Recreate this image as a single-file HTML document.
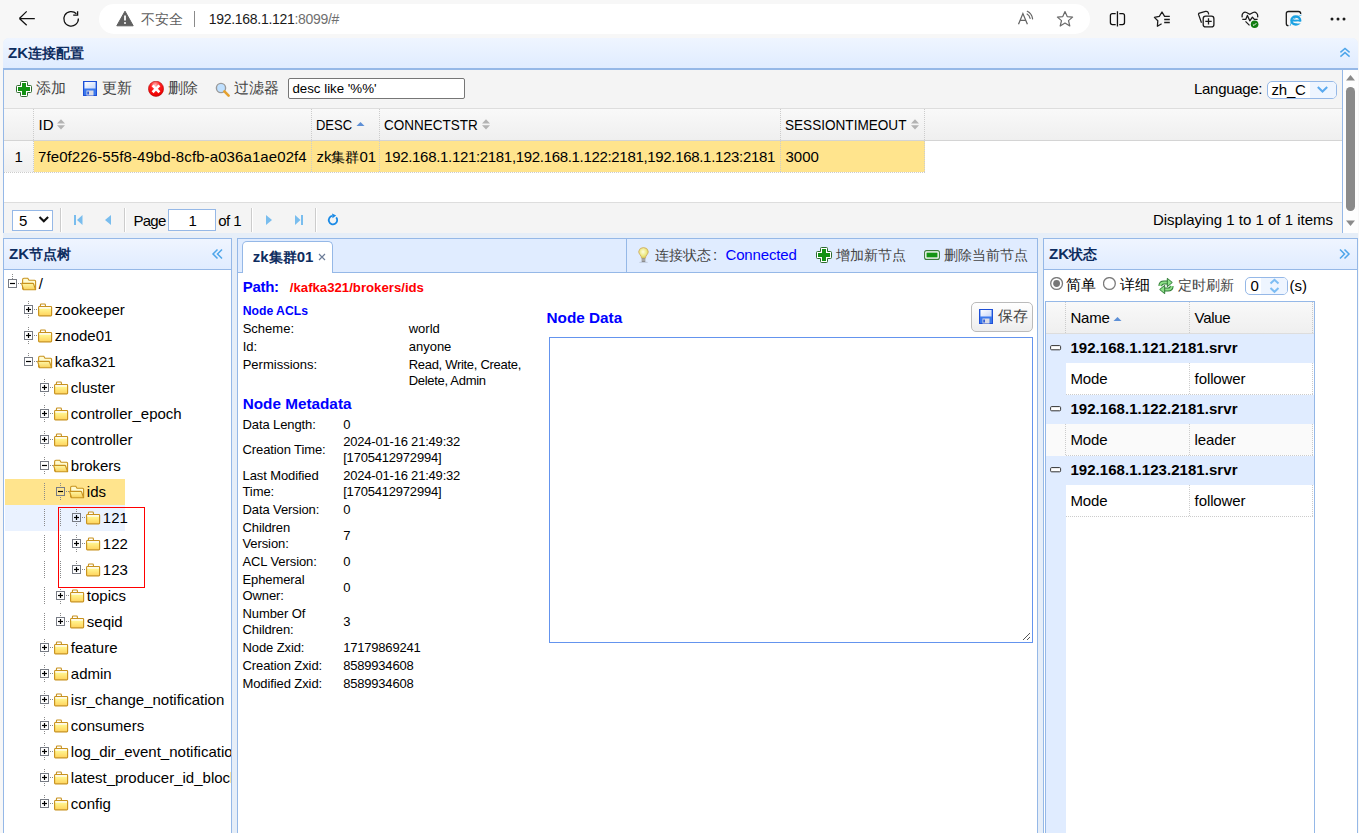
<!DOCTYPE html>
<html><head><meta charset="utf-8"><style>
html,body{margin:0;padding:0;width:1359px;height:833px;overflow:hidden;background:#f7f7f7}
body{position:relative;font-family:"Liberation Sans",sans-serif;color:#000}
.r{position:absolute;display:block}
.t{position:absolute;white-space:nowrap}
</style></head><body>
<div class="r" style="left:0px;top:0px;width:1359px;height:833px;background:#f7f7f7"></div>
<svg class="r" style="left:18px;top:10px;" width="18" height="18" viewBox="0 0 18 18"><path d="M1.4 8.5H16.8M1.4 8.5L8.7 1.4M1.4 8.5L8.7 15.3" fill="none" stroke="#111" stroke-width="1.25"/></svg>
<svg class="r" style="left:61px;top:10px;" width="20" height="19" viewBox="0 0 20 19"><path d="M17.4 8.6A7.3 7.3 0 1 1 15.4 3.8" fill="none" stroke="#111" stroke-width="1.25"/><path d="M16.6 1.2V5.1H12.2" fill="none" stroke="#111" stroke-width="1.3"/></svg>
<div class="r" style="left:99px;top:4px;width:991px;height:30px;background:#fff;border-radius:15px"></div>
<svg class="r" style="left:116px;top:10px;" width="18" height="17" viewBox="0 0 18 17"><path d="M9 1.2L17.2 15.8H0.8Z" fill="#5f5f5f" stroke="#5f5f5f" stroke-width="1" stroke-linejoin="round"/><path d="M9 5.6V10.6" stroke="#fff" stroke-width="1.8"/><circle cx="9" cy="13" r="1" fill="#fff"/></svg>
<div class="t" style="left:140.5px;top:10.15px;font-size:14px;line-height:18px;color:#5f5f5f">不安全</div>
<div class="r" style="left:194px;top:11px;width:1px;height:16px;background:#8a8a8a"></div>
<div class="t" style="left:208.8px;top:10.45px;font-size:14px;line-height:18px;color:#1a1a1a;letter-spacing:-0.3px">192.168.1.121<span style="color:#6f6f6f">:8099/#</span></div>
<svg class="r" style="left:1016px;top:10px;" width="19" height="17" viewBox="0 0 19 17"><path d="M2.5 14.3L6.9 3.6L11.4 14.3M4.4 10.4H9.6" fill="none" stroke="#646464" stroke-width="1.25"/><path d="M11.1 4.1Q13.5 5.5 14.1 8.4M11.3 1.3Q15.8 3.5 16.6 8.8" fill="none" stroke="#646464" stroke-width="1.2" stroke-linecap="round"/></svg>
<svg class="r" style="left:1056px;top:10px;" width="18" height="18" viewBox="0 0 18 18"><path d="M9 1.5L11.2 6.6L16.6 7.1L12.5 10.6L13.8 16L9 13.1L4.2 16L5.5 10.6L1.4 7.1L6.8 6.6Z" fill="none" stroke="#6a6a6a" stroke-width="1.2" stroke-linejoin="round"/></svg>
<svg class="r" style="left:1109px;top:10px;" width="17" height="18" viewBox="0 0 17 18"><path d="M6.7 3.6H3.4Q1.4 3.6 1.4 5.6V12.6Q1.4 14.6 3.4 14.6H6.7M10.3 3.6H13.5Q15.5 3.6 15.5 5.6V12.6Q15.5 14.6 13.5 14.6H10.3M8.45 1.3V16.6" fill="none" stroke="#111" stroke-width="1.3"/></svg>
<svg class="r" style="left:1153px;top:10px;" width="19" height="18" viewBox="0 0 19 18"><path d="M8.6 13.8L4.4 16.2L4.8 10.8L1.4 7.4L6.3 6.4L9 2L11.6 6.4H16.8" fill="none" stroke="#1b1b1b" stroke-width="1.3" stroke-linejoin="round"/><path d="M11.2 9.5H16.8M11.2 12.5H16.8" stroke="#1b1b1b" stroke-width="1.3"/></svg>
<svg class="r" style="left:1197px;top:10px;" width="19" height="19" viewBox="0 0 19 19"><path d="M4.5 12.7L1.6 4.6Q1.2 3.5 2.4 3.1L8.5 1.4Q10.8 0.9 11.5 3.2L11.6 4.5" fill="none" stroke="#1b1b1b" stroke-width="1.25"/><rect x="6.2" y="6.2" width="10.7" height="10.7" rx="2.5" fill="#f7f7f7" stroke="#1b1b1b" stroke-width="1.3"/><path d="M11.5 8.2V14.6M8.3 11.4H14.7" stroke="#1b1b1b" stroke-width="1.3"/></svg>
<svg class="r" style="left:1241px;top:10px;" width="19" height="19" viewBox="0 0 19 19"><path d="M1.3 7.4C0.3 3.5 3 1.5 5.5 2.5L8.8 4.3L12.1 2.5C14.6 1.5 17.3 3.5 16.6 7.4" fill="none" stroke="#1b1b1b" stroke-width="1.3"/><path d="M1.3 9.4H4.7L6.4 5.4L8.8 10.8L11.4 7.2L13.4 9.4H16.6" fill="none" stroke="#1b1b1b" stroke-width="1.3" stroke-linejoin="round"/><path d="M4.5 11.4L8.5 15.4" stroke="#1b1b1b" stroke-width="1.3"/><circle cx="13.6" cy="14.3" r="3.8" fill="#107c10"/><path d="M11.9 14.5L13 15.5L15.3 13.2" fill="none" stroke="#fff" stroke-width="1"/></svg>
<svg class="r" style="left:1284px;top:9px;" width="20" height="20" viewBox="0 0 20 20"><path d="M4.5 16.7Q2.3 16.7 2.3 14.5V4.5Q2.3 2.5 4.5 2.5H14.5Q16.7 2.5 16.7 4.7V5" fill="none" stroke="#1b1b1b" stroke-width="1.3"/><ellipse cx="11.8" cy="11.5" rx="4.4" ry="4" fill="none" stroke="#1ba1e2" stroke-width="2.4"/><path d="M7.8 11.6H16.4" stroke="#1ba1e2" stroke-width="1.9"/><rect x="12.6" y="12.7" width="5" height="1.8" fill="#f7f7f7"/><path d="M6 17Q7.5 9 17.5 6" fill="none" stroke="#1ba1e2" stroke-width="1" opacity="0.7"/></svg>
<svg class="r" style="left:1330px;top:16px;" width="16" height="6" viewBox="0 0 16 6"><circle cx="2" cy="3" r="1.5" fill="#1b1b1b"/><circle cx="8" cy="3" r="1.5" fill="#1b1b1b"/><circle cx="14" cy="3" r="1.5" fill="#1b1b1b"/></svg>
<div class="r" style="left:3px;top:38px;width:1355px;height:795px;background:#E6EEF8;border-radius:6px 6px 0 0"></div>
<div class="r" style="left:3px;top:38px;width:1355px;height:32px;background:linear-gradient(#EFF5FF,#E0ECFF);border-radius:6px 6px 0 0;border-bottom:2px solid #95B8E7;box-sizing:border-box"></div>
<div class="t" style="left:8px;top:43.10px;font-size:15px;line-height:19px;color:#0E2D5F;font-weight:700">ZK<span style="font-size:14px">连接配置</span></div>
<svg class="r" style="left:1338px;top:46px;" width="14" height="13" viewBox="0 0 14 13"><path d="M2.4 6.4L7 2.4L11.6 6.4M2.4 10.6L7 6.6L11.6 10.6" fill="none" stroke="#4fa6ea" stroke-width="1.5"/></svg>
<div class="r" style="left:3px;top:70px;width:1340px;height:163px;background:#fff;border-left:1px solid #95B8E7;border-right:1px solid #95B8E7;box-sizing:border-box"></div>
<div class="r" style="left:1343px;top:70px;width:15px;height:163px;background:#fdfdfd"></div>
<svg class="r" style="left:1345px;top:74px;" width="11" height="7" viewBox="0 0 11 7"><path d="M1 6.5L5.5 1L10 6.5Z" fill="#8a8a8a"/></svg>
<div class="r" style="left:1346px;top:87px;width:9px;height:124px;background:#8a8a8a;border-radius:4.5px"></div>
<svg class="r" style="left:1345px;top:220px;" width="11" height="7" viewBox="0 0 11 7"><path d="M1 0.5L5.5 6L10 0.5Z" fill="#8a8a8a"/></svg>
<div class="r" style="left:4px;top:70px;width:1338px;height:39px;background:#F4F4F4;border-bottom:1px solid #ddd;box-sizing:border-box"></div>
<svg class="r" style="left:16px;top:81px;" width="16" height="16" viewBox="0 0 16 16"><path d="M5.5 0.5H10.5Q11.5 0.5 11.5 1.5V4.5H14.5Q15.5 4.5 15.5 5.5V10.5Q15.5 11.5 14.5 11.5H11.5V14.5Q11.5 15.5 10.5 15.5H5.5Q4.5 15.5 4.5 14.5V11.5H1.5Q0.5 11.5 0.5 10.5V5.5Q0.5 4.5 1.5 4.5H4.5V1.5Q4.5 0.5 5.5 0.5Z" fill="#fff" stroke="#2e6b2e" stroke-width="1"/><path d="M6 2H10V6H14V10H10V14H6V10H2V6H6Z" fill="#119111"/></svg>
<div class="t" style="left:36px;top:78.30px;font-size:15px;line-height:19px;color:#444">添加</div>
<svg class="r" style="left:83px;top:81px;" width="14" height="15" viewBox="0 0 14 15"><defs><linearGradient id="svl" x1="0" y1="0" x2="1" y2="1"><stop offset="0" stop-color="#ffffff"/><stop offset="1" stop-color="#c6d6fa"/></linearGradient></defs><rect x="0.5" y="0.5" width="13" height="14" fill="#3b78ec" stroke="#1e4fd6"/><rect x="1.5" y="1" width="11" height="6.5" fill="url(#svl)"/><rect x="3.5" y="9.5" width="7" height="5" fill="#dcdce4"/><rect x="4.3" y="10.5" width="1.6" height="3" fill="#1e4fd6"/></svg>
<div class="t" style="left:102px;top:78.30px;font-size:15px;line-height:19px;color:#444">更新</div>
<svg class="r" style="left:148px;top:81px;" width="16" height="16" viewBox="0 0 16 16"><defs><radialGradient id="rg1" cx="0.45" cy="0.25" r="0.85"><stop offset="0" stop-color="#ffc0c0"/><stop offset="0.35" stop-color="#f22"/><stop offset="0.8" stop-color="#e00"/><stop offset="1" stop-color="#a30000"/></radialGradient></defs><circle cx="8" cy="7.8" r="7.6" fill="url(#rg1)" stroke="#b01010" stroke-width="0.6"/><path d="M4.6 4.4L11.4 11.2M11.4 4.4L4.6 11.2" stroke="#fff" stroke-width="2.7"/></svg>
<div class="t" style="left:167.5px;top:78.30px;font-size:15px;line-height:19px;color:#444">删除</div>
<svg class="r" style="left:214.5px;top:81.5px;" width="15" height="15" viewBox="0 0 15 15"><circle cx="6" cy="6" r="4.6" fill="#bfe0ff" stroke="#9a9a9a" stroke-width="1.4"/><path d="M9.4 9.4L13.6 13.6" stroke="#e5a12f" stroke-width="2.6" stroke-linecap="round"/></svg>
<div class="t" style="left:233.5px;top:78.30px;font-size:15px;line-height:19px;color:#444">过滤器</div>
<div class="r" style="left:288px;top:78px;width:177px;height:21px;background:#fff;border:1px solid #767676;border-radius:2px;box-sizing:border-box"></div>
<div class="t" style="left:292.4px;top:79.79px;font-size:13.3px;line-height:17px">desc like '%%'</div>
<div class="t" style="left:1194px;top:79.30px;font-size:15px;line-height:19px;letter-spacing:-0.3px">Language:</div>
<div class="r" style="left:1267px;top:81px;width:70px;height:18px;background:#fff;border:1px solid #95B8E7;border-radius:5px;box-sizing:border-box;overflow:hidden"></div>
<div class="r" style="left:1310px;top:82px;width:26px;height:16px;background:#eef5ff;border-radius:0 4px 4px 0"></div>
<div class="t" style="left:1271.5px;top:80.30px;font-size:15px;line-height:19px;letter-spacing:-0.2px">zh_C</div>
<svg class="r" style="left:1316px;top:85px;" width="13" height="9" viewBox="0 0 13 9"><path d="M1.8 2L6.5 6.5L11.2 2" fill="none" stroke="#5aaaf0" stroke-width="2"/></svg>
<div class="r" style="left:4px;top:109px;width:1338px;height:32px;background:linear-gradient(#F9F9F9,#EFEFEF);border-bottom:1px solid #d4d4d4;box-sizing:border-box"></div>
<div class="r" style="left:33px;top:109px;width:1px;height:31px;background:repeating-linear-gradient(#ccc 0 1px,transparent 1px 2px)"></div>
<div class="r" style="left:311px;top:109px;width:1px;height:31px;background:repeating-linear-gradient(#ccc 0 1px,transparent 1px 2px)"></div>
<div class="r" style="left:379px;top:109px;width:1px;height:31px;background:repeating-linear-gradient(#ccc 0 1px,transparent 1px 2px)"></div>
<div class="r" style="left:780px;top:109px;width:1px;height:31px;background:repeating-linear-gradient(#ccc 0 1px,transparent 1px 2px)"></div>
<div class="r" style="left:924px;top:109px;width:1px;height:31px;background:repeating-linear-gradient(#ccc 0 1px,transparent 1px 2px)"></div>
<div class="t" style="left:38.5px;top:115.30px;font-size:15px;line-height:19px">ID</div>
<svg class="r" style="left:57px;top:119px;" width="8" height="11" viewBox="0 0 8 11"><path d="M0 4.5L4 0.2L8 4.5Z M0 6.2L4 10.5L8 6.2Z" fill="#b3b3b3"/></svg>
<div class="t" style="left:316.4px;top:115.30px;font-size:15px;line-height:19px;transform:scaleX(0.865);transform-origin:0 0">DESC</div>
<svg class="r" style="left:355.5px;top:121px;" width="9" height="6" viewBox="0 0 9 6"><path d="M0.5 5L4.5 1L8.5 5Z" fill="#5d8fd6"/></svg>
<div class="t" style="left:383.5px;top:115.30px;font-size:15px;line-height:19px;transform:scaleX(0.9);transform-origin:0 0">CONNECTSTR</div>
<svg class="r" style="left:482px;top:119px;" width="8" height="11" viewBox="0 0 8 11"><path d="M0 4.5L4 0.2L8 4.5Z M0 6.2L4 10.5L8 6.2Z" fill="#b3b3b3"/></svg>
<div class="t" style="left:785px;top:115.30px;font-size:15px;line-height:19px;transform:scaleX(0.905);transform-origin:0 0">SESSIONTIMEOUT</div>
<svg class="r" style="left:910.5px;top:119px;" width="8" height="11" viewBox="0 0 8 11"><path d="M0 4.5L4 0.2L8 4.5Z M0 6.2L4 10.5L8 6.2Z" fill="#b3b3b3"/></svg>
<div class="r" style="left:4px;top:141px;width:30px;height:31px;background:linear-gradient(#F9F9F9,#EFEFEF)"></div>
<div class="r" style="left:34px;top:141px;width:891px;height:31px;background:#FFE48D"></div>
<div class="r" style="left:4px;top:172px;width:921px;height:1px;background:repeating-linear-gradient(90deg,#ccc 0 1px,transparent 1px 2px)"></div>
<div class="r" style="left:33px;top:141px;width:1px;height:31px;background:repeating-linear-gradient(#ccc 0 1px,transparent 1px 2px)"></div>
<div class="r" style="left:311px;top:141px;width:1px;height:31px;background:repeating-linear-gradient(#ccc 0 1px,transparent 1px 2px)"></div>
<div class="r" style="left:379px;top:141px;width:1px;height:31px;background:repeating-linear-gradient(#ccc 0 1px,transparent 1px 2px)"></div>
<div class="r" style="left:780px;top:141px;width:1px;height:31px;background:repeating-linear-gradient(#ccc 0 1px,transparent 1px 2px)"></div>
<div class="r" style="left:924px;top:141px;width:1px;height:31px;background:repeating-linear-gradient(#ccc 0 1px,transparent 1px 2px)"></div>
<div class="t" style="left:14.5px;top:147.05px;font-size:15px;line-height:19px">1</div>
<div class="t" style="left:38px;top:147.05px;font-size:15px;line-height:19px;letter-spacing:0.1px">7fe0f226-55f8-49bd-8cfb-a036a1ae02f4</div>
<div class="t" style="left:316.4px;top:147.05px;font-size:15px;line-height:19px">zk<span style="font-size:14px">集群</span>01</div>
<div class="t" style="left:384.2px;top:147.05px;font-size:15px;line-height:19px;letter-spacing:-0.32px">192.168.1.121:2181,192.168.1.122:2181,192.168.1.123:2181</div>
<div class="t" style="left:785.5px;top:147.05px;font-size:15px;line-height:19px">3000</div>
<div class="r" style="left:4px;top:202px;width:1338px;height:31px;background:#F4F4F4;border-top:1px solid #ddd;box-sizing:border-box"></div>
<div class="r" style="left:12px;top:210px;width:41px;height:21px;background:#fff;border:1px solid #95B8E7;box-sizing:border-box"></div>
<div class="t" style="left:19px;top:210.80px;font-size:15px;line-height:19px">5</div>
<svg class="r" style="left:38px;top:215px;" width="12" height="9" viewBox="0 0 12 9"><path d="M1.5 2L5.8 6.3L10.1 2" fill="none" stroke="#111" stroke-width="2.1"/></svg>
<div class="r" style="left:60px;top:208px;width:1px;height:24px;background:#ccc"></div>
<div class="r" style="left:61px;top:208px;width:1px;height:24px;background:#fff"></div>
<div class="r" style="left:124px;top:208px;width:1px;height:24px;background:#ccc"></div>
<div class="r" style="left:125px;top:208px;width:1px;height:24px;background:#fff"></div>
<div class="r" style="left:251px;top:208px;width:1px;height:24px;background:#ccc"></div>
<div class="r" style="left:252px;top:208px;width:1px;height:24px;background:#fff"></div>
<div class="r" style="left:315px;top:208px;width:1px;height:24px;background:#ccc"></div>
<div class="r" style="left:316px;top:208px;width:1px;height:24px;background:#fff"></div>
<svg class="r" style="left:73px;top:214px;" width="11" height="12" viewBox="0 0 11 12"><rect x="1" y="1" width="2" height="10" fill="#79bdee"/><path d="M9.5 1V11L4 6Z" fill="#79bdee"/></svg>
<svg class="r" style="left:104px;top:214px;" width="8" height="12" viewBox="0 0 8 12"><path d="M7 1V11L1 6Z" fill="#79bdee"/></svg>
<div class="t" style="left:133.6px;top:210.90px;font-size:15px;line-height:19px;letter-spacing:-0.8px">Page</div>
<div class="r" style="left:168px;top:209px;width:48px;height:22px;background:#fff;border:1px solid #95B8E7;box-sizing:border-box"></div>
<div class="t" style="left:188.5px;top:210.60px;font-size:15px;line-height:19px">1</div>
<div class="t" style="left:218.3px;top:210.90px;font-size:15px;line-height:19px;letter-spacing:-0.6px">of 1</div>
<svg class="r" style="left:265px;top:214px;" width="8" height="12" viewBox="0 0 8 12"><path d="M1 1V11L7 6Z" fill="#79bdee"/></svg>
<svg class="r" style="left:294px;top:214px;" width="11" height="12" viewBox="0 0 11 12"><path d="M1 1V11L6.5 6Z" fill="#79bdee"/><rect x="7" y="1" width="2" height="10" fill="#79bdee"/></svg>
<svg class="r" style="left:326px;top:212px;" width="14" height="14" viewBox="0 0 14 14"><path d="M10.2 5.4A4.2 4.2 0 1 1 6.3 3.96" fill="none" stroke="#1a8ae6" stroke-width="1.8"/><path d="M6.1 1.4L10.2 3.6L6.5 6.2Z" fill="#1a8ae6"/></svg>
<div class="t" style="right:26px;top:210.30px;font-size:15px;line-height:19px">Displaying 1 to 1 of 1 items</div>
<div class="r" style="left:3px;top:238px;width:229px;height:32px;background:linear-gradient(#EFF5FF,#E0ECFF);border:1px solid #95B8E7;box-sizing:border-box"></div>
<div class="t" style="left:9px;top:244.30px;font-size:15px;line-height:19px;color:#0E2D5F;font-weight:700">ZK<span style="font-size:14px">节点树</span></div>
<svg class="r" style="left:211px;top:248px;" width="13" height="12" viewBox="0 0 13 12"><path d="M6.5 1.5L2 6L6.5 10.5M11 1.5L6.5 6L11 10.5" fill="none" stroke="#4fa6ea" stroke-width="1.5"/></svg>
<div class="r" style="left:3px;top:270px;width:229px;height:563px;background:#fff;border-left:1px solid #95B8E7;border-right:1px solid #95B8E7;box-sizing:border-box"></div>
<div class="r" style="left:5px;top:479px;width:120px;height:26px;background:#FFE48D"></div>
<div class="r" style="left:5px;top:505px;width:120px;height:26px;background:#EAF2FF"></div>
<div class="r" style="left:12px;top:274px;width:1px;height:5px;background:repeating-linear-gradient(#8a8a8a 0 1px,transparent 1px 2px)"></div>
<div class="r" style="left:17px;top:283px;width:4px;height:1px;background:repeating-linear-gradient(90deg,transparent 0 1px,#8a8a8a 1px 2px)"></div>
<svg class="r" style="left:8px;top:279px;" width="9" height="9" viewBox="0 0 9 9"><rect x="0.5" y="0.5" width="8" height="8" fill="none" stroke="#777b84"/><path d="M2 4.5H7" stroke="#000" stroke-width="1.2"/></svg>
<svg class="r" style="left:21.0px;top:277px;" width="16" height="14" viewBox="0 0 16 14"><defs><linearGradient id="fgo0" x1="0" y1="0" x2="0" y2="1"><stop offset="0" stop-color="#fff8a8"/><stop offset="1" stop-color="#f8cf58"/></linearGradient></defs><path d="M1.6 12.5V2.8Q1.6 1.3 2.9 1.3H6.8L8 3.2H13.6Q14.6 3.2 14.6 4.2V12.5" fill="#fffbd0" stroke="#c8921e" stroke-width="1.1"/><path d="M0.6 6.4H11.8Q12.4 6.4 12.6 7L14.6 12.8H2.6Z" fill="url(#fgo0)" stroke="#c8921e" stroke-width="1.1" stroke-linejoin="round"/></svg>
<div class="t" style="left:38.8px;top:274.00px;font-size:15px;line-height:19px">/</div>
<div class="r" style="left:28px;top:301px;width:1px;height:4px;background:repeating-linear-gradient(#8a8a8a 0 1px,transparent 1px 2px)"></div>
<div class="r" style="left:28px;top:315px;width:1px;height:4px;background:repeating-linear-gradient(#8a8a8a 0 1px,transparent 1px 2px)"></div>
<div class="r" style="left:33px;top:309px;width:4px;height:1px;background:repeating-linear-gradient(90deg,transparent 0 1px,#8a8a8a 1px 2px)"></div>
<svg class="r" style="left:24px;top:305px;" width="9" height="9" viewBox="0 0 9 9"><rect x="0.5" y="0.5" width="8" height="8" fill="none" stroke="#777b84"/><path d="M2 4.5H7" stroke="#000" stroke-width="1.2"/><path d="M4.5 2V7" stroke="#000" stroke-width="1.2"/></svg>
<svg class="r" style="left:38px;top:303px;" width="15" height="14" viewBox="0 0 15 14"><defs><linearGradient id="fg1" x1="0" y1="0" x2="0" y2="1"><stop offset="0" stop-color="#fffbd8"/><stop offset="0.3" stop-color="#fff38c"/><stop offset="1" stop-color="#ffd25c"/></linearGradient></defs><path d="M2.4 3.6V1.9Q2.4 1 3.3 1H6.6Q7.4 1 7.4 1.9V3.6" fill="#fff" stroke="#c8921e" stroke-width="1.1"/><rect x="0.6" y="3.6" width="13" height="9.2" rx="0.8" fill="url(#fg1)" stroke="#c8921e" stroke-width="1.15"/><rect x="1.2" y="4.2" width="11.8" height="1.3" fill="#fff"/></svg>
<div class="t" style="left:54.8px;top:300.00px;font-size:15px;line-height:19px">zookeeper</div>
<div class="r" style="left:28px;top:327px;width:1px;height:4px;background:repeating-linear-gradient(#8a8a8a 0 1px,transparent 1px 2px)"></div>
<div class="r" style="left:28px;top:341px;width:1px;height:4px;background:repeating-linear-gradient(#8a8a8a 0 1px,transparent 1px 2px)"></div>
<div class="r" style="left:33px;top:335px;width:4px;height:1px;background:repeating-linear-gradient(90deg,transparent 0 1px,#8a8a8a 1px 2px)"></div>
<svg class="r" style="left:24px;top:331px;" width="9" height="9" viewBox="0 0 9 9"><rect x="0.5" y="0.5" width="8" height="8" fill="none" stroke="#777b84"/><path d="M2 4.5H7" stroke="#000" stroke-width="1.2"/><path d="M4.5 2V7" stroke="#000" stroke-width="1.2"/></svg>
<svg class="r" style="left:38px;top:329px;" width="15" height="14" viewBox="0 0 15 14"><defs><linearGradient id="fg2" x1="0" y1="0" x2="0" y2="1"><stop offset="0" stop-color="#fffbd8"/><stop offset="0.3" stop-color="#fff38c"/><stop offset="1" stop-color="#ffd25c"/></linearGradient></defs><path d="M2.4 3.6V1.9Q2.4 1 3.3 1H6.6Q7.4 1 7.4 1.9V3.6" fill="#fff" stroke="#c8921e" stroke-width="1.1"/><rect x="0.6" y="3.6" width="13" height="9.2" rx="0.8" fill="url(#fg2)" stroke="#c8921e" stroke-width="1.15"/><rect x="1.2" y="4.2" width="11.8" height="1.3" fill="#fff"/></svg>
<div class="t" style="left:54.8px;top:326.00px;font-size:15px;line-height:19px">znode01</div>
<div class="r" style="left:28px;top:353px;width:1px;height:4px;background:repeating-linear-gradient(#8a8a8a 0 1px,transparent 1px 2px)"></div>
<div class="r" style="left:33px;top:361px;width:4px;height:1px;background:repeating-linear-gradient(90deg,transparent 0 1px,#8a8a8a 1px 2px)"></div>
<svg class="r" style="left:24px;top:357px;" width="9" height="9" viewBox="0 0 9 9"><rect x="0.5" y="0.5" width="8" height="8" fill="none" stroke="#777b84"/><path d="M2 4.5H7" stroke="#000" stroke-width="1.2"/></svg>
<svg class="r" style="left:37.0px;top:355px;" width="16" height="14" viewBox="0 0 16 14"><defs><linearGradient id="fgo3" x1="0" y1="0" x2="0" y2="1"><stop offset="0" stop-color="#fff8a8"/><stop offset="1" stop-color="#f8cf58"/></linearGradient></defs><path d="M1.6 12.5V2.8Q1.6 1.3 2.9 1.3H6.8L8 3.2H13.6Q14.6 3.2 14.6 4.2V12.5" fill="#fffbd0" stroke="#c8921e" stroke-width="1.1"/><path d="M0.6 6.4H11.8Q12.4 6.4 12.6 7L14.6 12.8H2.6Z" fill="url(#fgo3)" stroke="#c8921e" stroke-width="1.1" stroke-linejoin="round"/></svg>
<div class="t" style="left:54.8px;top:352.00px;font-size:15px;line-height:19px">kafka321</div>
<div class="r" style="left:44px;top:379px;width:1px;height:4px;background:repeating-linear-gradient(#8a8a8a 0 1px,transparent 1px 2px)"></div>
<div class="r" style="left:44px;top:393px;width:1px;height:4px;background:repeating-linear-gradient(#8a8a8a 0 1px,transparent 1px 2px)"></div>
<div class="r" style="left:49px;top:387px;width:4px;height:1px;background:repeating-linear-gradient(90deg,transparent 0 1px,#8a8a8a 1px 2px)"></div>
<svg class="r" style="left:40px;top:383px;" width="9" height="9" viewBox="0 0 9 9"><rect x="0.5" y="0.5" width="8" height="8" fill="none" stroke="#777b84"/><path d="M2 4.5H7" stroke="#000" stroke-width="1.2"/><path d="M4.5 2V7" stroke="#000" stroke-width="1.2"/></svg>
<svg class="r" style="left:54px;top:381px;" width="15" height="14" viewBox="0 0 15 14"><defs><linearGradient id="fg4" x1="0" y1="0" x2="0" y2="1"><stop offset="0" stop-color="#fffbd8"/><stop offset="0.3" stop-color="#fff38c"/><stop offset="1" stop-color="#ffd25c"/></linearGradient></defs><path d="M2.4 3.6V1.9Q2.4 1 3.3 1H6.6Q7.4 1 7.4 1.9V3.6" fill="#fff" stroke="#c8921e" stroke-width="1.1"/><rect x="0.6" y="3.6" width="13" height="9.2" rx="0.8" fill="url(#fg4)" stroke="#c8921e" stroke-width="1.15"/><rect x="1.2" y="4.2" width="11.8" height="1.3" fill="#fff"/></svg>
<div class="t" style="left:70.8px;top:378.00px;font-size:15px;line-height:19px">cluster</div>
<div class="r" style="left:44px;top:405px;width:1px;height:4px;background:repeating-linear-gradient(#8a8a8a 0 1px,transparent 1px 2px)"></div>
<div class="r" style="left:44px;top:419px;width:1px;height:4px;background:repeating-linear-gradient(#8a8a8a 0 1px,transparent 1px 2px)"></div>
<div class="r" style="left:49px;top:413px;width:4px;height:1px;background:repeating-linear-gradient(90deg,transparent 0 1px,#8a8a8a 1px 2px)"></div>
<svg class="r" style="left:40px;top:409px;" width="9" height="9" viewBox="0 0 9 9"><rect x="0.5" y="0.5" width="8" height="8" fill="none" stroke="#777b84"/><path d="M2 4.5H7" stroke="#000" stroke-width="1.2"/><path d="M4.5 2V7" stroke="#000" stroke-width="1.2"/></svg>
<svg class="r" style="left:54px;top:407px;" width="15" height="14" viewBox="0 0 15 14"><defs><linearGradient id="fg5" x1="0" y1="0" x2="0" y2="1"><stop offset="0" stop-color="#fffbd8"/><stop offset="0.3" stop-color="#fff38c"/><stop offset="1" stop-color="#ffd25c"/></linearGradient></defs><path d="M2.4 3.6V1.9Q2.4 1 3.3 1H6.6Q7.4 1 7.4 1.9V3.6" fill="#fff" stroke="#c8921e" stroke-width="1.1"/><rect x="0.6" y="3.6" width="13" height="9.2" rx="0.8" fill="url(#fg5)" stroke="#c8921e" stroke-width="1.15"/><rect x="1.2" y="4.2" width="11.8" height="1.3" fill="#fff"/></svg>
<div class="t" style="left:70.8px;top:404.00px;font-size:15px;line-height:19px">controller_epoch</div>
<div class="r" style="left:44px;top:431px;width:1px;height:4px;background:repeating-linear-gradient(#8a8a8a 0 1px,transparent 1px 2px)"></div>
<div class="r" style="left:44px;top:445px;width:1px;height:4px;background:repeating-linear-gradient(#8a8a8a 0 1px,transparent 1px 2px)"></div>
<div class="r" style="left:49px;top:439px;width:4px;height:1px;background:repeating-linear-gradient(90deg,transparent 0 1px,#8a8a8a 1px 2px)"></div>
<svg class="r" style="left:40px;top:435px;" width="9" height="9" viewBox="0 0 9 9"><rect x="0.5" y="0.5" width="8" height="8" fill="none" stroke="#777b84"/><path d="M2 4.5H7" stroke="#000" stroke-width="1.2"/><path d="M4.5 2V7" stroke="#000" stroke-width="1.2"/></svg>
<svg class="r" style="left:54px;top:433px;" width="15" height="14" viewBox="0 0 15 14"><defs><linearGradient id="fg6" x1="0" y1="0" x2="0" y2="1"><stop offset="0" stop-color="#fffbd8"/><stop offset="0.3" stop-color="#fff38c"/><stop offset="1" stop-color="#ffd25c"/></linearGradient></defs><path d="M2.4 3.6V1.9Q2.4 1 3.3 1H6.6Q7.4 1 7.4 1.9V3.6" fill="#fff" stroke="#c8921e" stroke-width="1.1"/><rect x="0.6" y="3.6" width="13" height="9.2" rx="0.8" fill="url(#fg6)" stroke="#c8921e" stroke-width="1.15"/><rect x="1.2" y="4.2" width="11.8" height="1.3" fill="#fff"/></svg>
<div class="t" style="left:70.8px;top:430.00px;font-size:15px;line-height:19px">controller</div>
<div class="r" style="left:44px;top:457px;width:1px;height:4px;background:repeating-linear-gradient(#8a8a8a 0 1px,transparent 1px 2px)"></div>
<div class="r" style="left:44px;top:471px;width:1px;height:4px;background:repeating-linear-gradient(#8a8a8a 0 1px,transparent 1px 2px)"></div>
<div class="r" style="left:49px;top:465px;width:4px;height:1px;background:repeating-linear-gradient(90deg,transparent 0 1px,#8a8a8a 1px 2px)"></div>
<svg class="r" style="left:40px;top:461px;" width="9" height="9" viewBox="0 0 9 9"><rect x="0.5" y="0.5" width="8" height="8" fill="none" stroke="#777b84"/><path d="M2 4.5H7" stroke="#000" stroke-width="1.2"/></svg>
<svg class="r" style="left:53.0px;top:459px;" width="16" height="14" viewBox="0 0 16 14"><defs><linearGradient id="fgo7" x1="0" y1="0" x2="0" y2="1"><stop offset="0" stop-color="#fff8a8"/><stop offset="1" stop-color="#f8cf58"/></linearGradient></defs><path d="M1.6 12.5V2.8Q1.6 1.3 2.9 1.3H6.8L8 3.2H13.6Q14.6 3.2 14.6 4.2V12.5" fill="#fffbd0" stroke="#c8921e" stroke-width="1.1"/><path d="M0.6 6.4H11.8Q12.4 6.4 12.6 7L14.6 12.8H2.6Z" fill="url(#fgo7)" stroke="#c8921e" stroke-width="1.1" stroke-linejoin="round"/></svg>
<div class="t" style="left:70.8px;top:456.00px;font-size:15px;line-height:19px">brokers</div>
<div class="r" style="left:44px;top:483px;width:1px;height:18px;background:repeating-linear-gradient(#8a8a8a 0 1px,transparent 1px 2px)"></div>
<div class="r" style="left:60px;top:483px;width:1px;height:4px;background:repeating-linear-gradient(#8a8a8a 0 1px,transparent 1px 2px)"></div>
<div class="r" style="left:60px;top:497px;width:1px;height:4px;background:repeating-linear-gradient(#8a8a8a 0 1px,transparent 1px 2px)"></div>
<div class="r" style="left:65px;top:491px;width:4px;height:1px;background:repeating-linear-gradient(90deg,transparent 0 1px,#8a8a8a 1px 2px)"></div>
<svg class="r" style="left:56px;top:487px;" width="9" height="9" viewBox="0 0 9 9"><rect x="0.5" y="0.5" width="8" height="8" fill="none" stroke="#777b84"/><path d="M2 4.5H7" stroke="#000" stroke-width="1.2"/></svg>
<svg class="r" style="left:69.0px;top:485px;" width="16" height="14" viewBox="0 0 16 14"><defs><linearGradient id="fgo8" x1="0" y1="0" x2="0" y2="1"><stop offset="0" stop-color="#fff8a8"/><stop offset="1" stop-color="#f8cf58"/></linearGradient></defs><path d="M1.6 12.5V2.8Q1.6 1.3 2.9 1.3H6.8L8 3.2H13.6Q14.6 3.2 14.6 4.2V12.5" fill="#fffbd0" stroke="#c8921e" stroke-width="1.1"/><path d="M0.6 6.4H11.8Q12.4 6.4 12.6 7L14.6 12.8H2.6Z" fill="url(#fgo8)" stroke="#c8921e" stroke-width="1.1" stroke-linejoin="round"/></svg>
<div class="t" style="left:86.8px;top:482.00px;font-size:15px;line-height:19px">ids</div>
<div class="r" style="left:44px;top:509px;width:1px;height:18px;background:repeating-linear-gradient(#8a8a8a 0 1px,transparent 1px 2px)"></div>
<div class="r" style="left:60px;top:509px;width:1px;height:18px;background:repeating-linear-gradient(#8a8a8a 0 1px,transparent 1px 2px)"></div>
<div class="r" style="left:76px;top:509px;width:1px;height:4px;background:repeating-linear-gradient(#8a8a8a 0 1px,transparent 1px 2px)"></div>
<div class="r" style="left:76px;top:523px;width:1px;height:4px;background:repeating-linear-gradient(#8a8a8a 0 1px,transparent 1px 2px)"></div>
<div class="r" style="left:81px;top:517px;width:4px;height:1px;background:repeating-linear-gradient(90deg,transparent 0 1px,#8a8a8a 1px 2px)"></div>
<svg class="r" style="left:72px;top:513px;" width="9" height="9" viewBox="0 0 9 9"><rect x="0.5" y="0.5" width="8" height="8" fill="none" stroke="#777b84"/><path d="M2 4.5H7" stroke="#000" stroke-width="1.2"/><path d="M4.5 2V7" stroke="#000" stroke-width="1.2"/></svg>
<svg class="r" style="left:86px;top:511px;" width="15" height="14" viewBox="0 0 15 14"><defs><linearGradient id="fg9" x1="0" y1="0" x2="0" y2="1"><stop offset="0" stop-color="#fffbd8"/><stop offset="0.3" stop-color="#fff38c"/><stop offset="1" stop-color="#ffd25c"/></linearGradient></defs><path d="M2.4 3.6V1.9Q2.4 1 3.3 1H6.6Q7.4 1 7.4 1.9V3.6" fill="#fff" stroke="#c8921e" stroke-width="1.1"/><rect x="0.6" y="3.6" width="13" height="9.2" rx="0.8" fill="url(#fg9)" stroke="#c8921e" stroke-width="1.15"/><rect x="1.2" y="4.2" width="11.8" height="1.3" fill="#fff"/></svg>
<div class="t" style="left:102.8px;top:508.00px;font-size:15px;line-height:19px">121</div>
<div class="r" style="left:44px;top:535px;width:1px;height:18px;background:repeating-linear-gradient(#8a8a8a 0 1px,transparent 1px 2px)"></div>
<div class="r" style="left:60px;top:535px;width:1px;height:18px;background:repeating-linear-gradient(#8a8a8a 0 1px,transparent 1px 2px)"></div>
<div class="r" style="left:76px;top:535px;width:1px;height:4px;background:repeating-linear-gradient(#8a8a8a 0 1px,transparent 1px 2px)"></div>
<div class="r" style="left:76px;top:549px;width:1px;height:4px;background:repeating-linear-gradient(#8a8a8a 0 1px,transparent 1px 2px)"></div>
<div class="r" style="left:81px;top:543px;width:4px;height:1px;background:repeating-linear-gradient(90deg,transparent 0 1px,#8a8a8a 1px 2px)"></div>
<svg class="r" style="left:72px;top:539px;" width="9" height="9" viewBox="0 0 9 9"><rect x="0.5" y="0.5" width="8" height="8" fill="none" stroke="#777b84"/><path d="M2 4.5H7" stroke="#000" stroke-width="1.2"/><path d="M4.5 2V7" stroke="#000" stroke-width="1.2"/></svg>
<svg class="r" style="left:86px;top:537px;" width="15" height="14" viewBox="0 0 15 14"><defs><linearGradient id="fg10" x1="0" y1="0" x2="0" y2="1"><stop offset="0" stop-color="#fffbd8"/><stop offset="0.3" stop-color="#fff38c"/><stop offset="1" stop-color="#ffd25c"/></linearGradient></defs><path d="M2.4 3.6V1.9Q2.4 1 3.3 1H6.6Q7.4 1 7.4 1.9V3.6" fill="#fff" stroke="#c8921e" stroke-width="1.1"/><rect x="0.6" y="3.6" width="13" height="9.2" rx="0.8" fill="url(#fg10)" stroke="#c8921e" stroke-width="1.15"/><rect x="1.2" y="4.2" width="11.8" height="1.3" fill="#fff"/></svg>
<div class="t" style="left:102.8px;top:534.00px;font-size:15px;line-height:19px">122</div>
<div class="r" style="left:44px;top:561px;width:1px;height:18px;background:repeating-linear-gradient(#8a8a8a 0 1px,transparent 1px 2px)"></div>
<div class="r" style="left:60px;top:561px;width:1px;height:18px;background:repeating-linear-gradient(#8a8a8a 0 1px,transparent 1px 2px)"></div>
<div class="r" style="left:76px;top:561px;width:1px;height:4px;background:repeating-linear-gradient(#8a8a8a 0 1px,transparent 1px 2px)"></div>
<div class="r" style="left:81px;top:569px;width:4px;height:1px;background:repeating-linear-gradient(90deg,transparent 0 1px,#8a8a8a 1px 2px)"></div>
<svg class="r" style="left:72px;top:565px;" width="9" height="9" viewBox="0 0 9 9"><rect x="0.5" y="0.5" width="8" height="8" fill="none" stroke="#777b84"/><path d="M2 4.5H7" stroke="#000" stroke-width="1.2"/><path d="M4.5 2V7" stroke="#000" stroke-width="1.2"/></svg>
<svg class="r" style="left:86px;top:563px;" width="15" height="14" viewBox="0 0 15 14"><defs><linearGradient id="fg11" x1="0" y1="0" x2="0" y2="1"><stop offset="0" stop-color="#fffbd8"/><stop offset="0.3" stop-color="#fff38c"/><stop offset="1" stop-color="#ffd25c"/></linearGradient></defs><path d="M2.4 3.6V1.9Q2.4 1 3.3 1H6.6Q7.4 1 7.4 1.9V3.6" fill="#fff" stroke="#c8921e" stroke-width="1.1"/><rect x="0.6" y="3.6" width="13" height="9.2" rx="0.8" fill="url(#fg11)" stroke="#c8921e" stroke-width="1.15"/><rect x="1.2" y="4.2" width="11.8" height="1.3" fill="#fff"/></svg>
<div class="t" style="left:102.8px;top:560.00px;font-size:15px;line-height:19px">123</div>
<div class="r" style="left:44px;top:587px;width:1px;height:18px;background:repeating-linear-gradient(#8a8a8a 0 1px,transparent 1px 2px)"></div>
<div class="r" style="left:60px;top:587px;width:1px;height:4px;background:repeating-linear-gradient(#8a8a8a 0 1px,transparent 1px 2px)"></div>
<div class="r" style="left:60px;top:601px;width:1px;height:4px;background:repeating-linear-gradient(#8a8a8a 0 1px,transparent 1px 2px)"></div>
<div class="r" style="left:65px;top:595px;width:4px;height:1px;background:repeating-linear-gradient(90deg,transparent 0 1px,#8a8a8a 1px 2px)"></div>
<svg class="r" style="left:56px;top:591px;" width="9" height="9" viewBox="0 0 9 9"><rect x="0.5" y="0.5" width="8" height="8" fill="none" stroke="#777b84"/><path d="M2 4.5H7" stroke="#000" stroke-width="1.2"/><path d="M4.5 2V7" stroke="#000" stroke-width="1.2"/></svg>
<svg class="r" style="left:70px;top:589px;" width="15" height="14" viewBox="0 0 15 14"><defs><linearGradient id="fg12" x1="0" y1="0" x2="0" y2="1"><stop offset="0" stop-color="#fffbd8"/><stop offset="0.3" stop-color="#fff38c"/><stop offset="1" stop-color="#ffd25c"/></linearGradient></defs><path d="M2.4 3.6V1.9Q2.4 1 3.3 1H6.6Q7.4 1 7.4 1.9V3.6" fill="#fff" stroke="#c8921e" stroke-width="1.1"/><rect x="0.6" y="3.6" width="13" height="9.2" rx="0.8" fill="url(#fg12)" stroke="#c8921e" stroke-width="1.15"/><rect x="1.2" y="4.2" width="11.8" height="1.3" fill="#fff"/></svg>
<div class="t" style="left:86.8px;top:586.00px;font-size:15px;line-height:19px">topics</div>
<div class="r" style="left:44px;top:613px;width:1px;height:18px;background:repeating-linear-gradient(#8a8a8a 0 1px,transparent 1px 2px)"></div>
<div class="r" style="left:60px;top:613px;width:1px;height:4px;background:repeating-linear-gradient(#8a8a8a 0 1px,transparent 1px 2px)"></div>
<div class="r" style="left:65px;top:621px;width:4px;height:1px;background:repeating-linear-gradient(90deg,transparent 0 1px,#8a8a8a 1px 2px)"></div>
<svg class="r" style="left:56px;top:617px;" width="9" height="9" viewBox="0 0 9 9"><rect x="0.5" y="0.5" width="8" height="8" fill="none" stroke="#777b84"/><path d="M2 4.5H7" stroke="#000" stroke-width="1.2"/><path d="M4.5 2V7" stroke="#000" stroke-width="1.2"/></svg>
<svg class="r" style="left:70px;top:615px;" width="15" height="14" viewBox="0 0 15 14"><defs><linearGradient id="fg13" x1="0" y1="0" x2="0" y2="1"><stop offset="0" stop-color="#fffbd8"/><stop offset="0.3" stop-color="#fff38c"/><stop offset="1" stop-color="#ffd25c"/></linearGradient></defs><path d="M2.4 3.6V1.9Q2.4 1 3.3 1H6.6Q7.4 1 7.4 1.9V3.6" fill="#fff" stroke="#c8921e" stroke-width="1.1"/><rect x="0.6" y="3.6" width="13" height="9.2" rx="0.8" fill="url(#fg13)" stroke="#c8921e" stroke-width="1.15"/><rect x="1.2" y="4.2" width="11.8" height="1.3" fill="#fff"/></svg>
<div class="t" style="left:86.8px;top:612.00px;font-size:15px;line-height:19px">seqid</div>
<div class="r" style="left:44px;top:639px;width:1px;height:4px;background:repeating-linear-gradient(#8a8a8a 0 1px,transparent 1px 2px)"></div>
<div class="r" style="left:44px;top:653px;width:1px;height:4px;background:repeating-linear-gradient(#8a8a8a 0 1px,transparent 1px 2px)"></div>
<div class="r" style="left:49px;top:647px;width:4px;height:1px;background:repeating-linear-gradient(90deg,transparent 0 1px,#8a8a8a 1px 2px)"></div>
<svg class="r" style="left:40px;top:643px;" width="9" height="9" viewBox="0 0 9 9"><rect x="0.5" y="0.5" width="8" height="8" fill="none" stroke="#777b84"/><path d="M2 4.5H7" stroke="#000" stroke-width="1.2"/><path d="M4.5 2V7" stroke="#000" stroke-width="1.2"/></svg>
<svg class="r" style="left:54px;top:641px;" width="15" height="14" viewBox="0 0 15 14"><defs><linearGradient id="fg14" x1="0" y1="0" x2="0" y2="1"><stop offset="0" stop-color="#fffbd8"/><stop offset="0.3" stop-color="#fff38c"/><stop offset="1" stop-color="#ffd25c"/></linearGradient></defs><path d="M2.4 3.6V1.9Q2.4 1 3.3 1H6.6Q7.4 1 7.4 1.9V3.6" fill="#fff" stroke="#c8921e" stroke-width="1.1"/><rect x="0.6" y="3.6" width="13" height="9.2" rx="0.8" fill="url(#fg14)" stroke="#c8921e" stroke-width="1.15"/><rect x="1.2" y="4.2" width="11.8" height="1.3" fill="#fff"/></svg>
<div class="t" style="left:70.8px;top:638.00px;font-size:15px;line-height:19px">feature</div>
<div class="r" style="left:44px;top:665px;width:1px;height:4px;background:repeating-linear-gradient(#8a8a8a 0 1px,transparent 1px 2px)"></div>
<div class="r" style="left:44px;top:679px;width:1px;height:4px;background:repeating-linear-gradient(#8a8a8a 0 1px,transparent 1px 2px)"></div>
<div class="r" style="left:49px;top:673px;width:4px;height:1px;background:repeating-linear-gradient(90deg,transparent 0 1px,#8a8a8a 1px 2px)"></div>
<svg class="r" style="left:40px;top:669px;" width="9" height="9" viewBox="0 0 9 9"><rect x="0.5" y="0.5" width="8" height="8" fill="none" stroke="#777b84"/><path d="M2 4.5H7" stroke="#000" stroke-width="1.2"/><path d="M4.5 2V7" stroke="#000" stroke-width="1.2"/></svg>
<svg class="r" style="left:54px;top:667px;" width="15" height="14" viewBox="0 0 15 14"><defs><linearGradient id="fg15" x1="0" y1="0" x2="0" y2="1"><stop offset="0" stop-color="#fffbd8"/><stop offset="0.3" stop-color="#fff38c"/><stop offset="1" stop-color="#ffd25c"/></linearGradient></defs><path d="M2.4 3.6V1.9Q2.4 1 3.3 1H6.6Q7.4 1 7.4 1.9V3.6" fill="#fff" stroke="#c8921e" stroke-width="1.1"/><rect x="0.6" y="3.6" width="13" height="9.2" rx="0.8" fill="url(#fg15)" stroke="#c8921e" stroke-width="1.15"/><rect x="1.2" y="4.2" width="11.8" height="1.3" fill="#fff"/></svg>
<div class="t" style="left:70.8px;top:664.00px;font-size:15px;line-height:19px">admin</div>
<div class="r" style="left:44px;top:691px;width:1px;height:4px;background:repeating-linear-gradient(#8a8a8a 0 1px,transparent 1px 2px)"></div>
<div class="r" style="left:44px;top:705px;width:1px;height:4px;background:repeating-linear-gradient(#8a8a8a 0 1px,transparent 1px 2px)"></div>
<div class="r" style="left:49px;top:699px;width:4px;height:1px;background:repeating-linear-gradient(90deg,transparent 0 1px,#8a8a8a 1px 2px)"></div>
<svg class="r" style="left:40px;top:695px;" width="9" height="9" viewBox="0 0 9 9"><rect x="0.5" y="0.5" width="8" height="8" fill="none" stroke="#777b84"/><path d="M2 4.5H7" stroke="#000" stroke-width="1.2"/><path d="M4.5 2V7" stroke="#000" stroke-width="1.2"/></svg>
<svg class="r" style="left:54px;top:693px;" width="15" height="14" viewBox="0 0 15 14"><defs><linearGradient id="fg16" x1="0" y1="0" x2="0" y2="1"><stop offset="0" stop-color="#fffbd8"/><stop offset="0.3" stop-color="#fff38c"/><stop offset="1" stop-color="#ffd25c"/></linearGradient></defs><path d="M2.4 3.6V1.9Q2.4 1 3.3 1H6.6Q7.4 1 7.4 1.9V3.6" fill="#fff" stroke="#c8921e" stroke-width="1.1"/><rect x="0.6" y="3.6" width="13" height="9.2" rx="0.8" fill="url(#fg16)" stroke="#c8921e" stroke-width="1.15"/><rect x="1.2" y="4.2" width="11.8" height="1.3" fill="#fff"/></svg>
<div class="t" style="left:70.8px;top:690.00px;font-size:15px;line-height:19px">isr_change_notification</div>
<div class="r" style="left:44px;top:717px;width:1px;height:4px;background:repeating-linear-gradient(#8a8a8a 0 1px,transparent 1px 2px)"></div>
<div class="r" style="left:44px;top:731px;width:1px;height:4px;background:repeating-linear-gradient(#8a8a8a 0 1px,transparent 1px 2px)"></div>
<div class="r" style="left:49px;top:725px;width:4px;height:1px;background:repeating-linear-gradient(90deg,transparent 0 1px,#8a8a8a 1px 2px)"></div>
<svg class="r" style="left:40px;top:721px;" width="9" height="9" viewBox="0 0 9 9"><rect x="0.5" y="0.5" width="8" height="8" fill="none" stroke="#777b84"/><path d="M2 4.5H7" stroke="#000" stroke-width="1.2"/><path d="M4.5 2V7" stroke="#000" stroke-width="1.2"/></svg>
<svg class="r" style="left:54px;top:719px;" width="15" height="14" viewBox="0 0 15 14"><defs><linearGradient id="fg17" x1="0" y1="0" x2="0" y2="1"><stop offset="0" stop-color="#fffbd8"/><stop offset="0.3" stop-color="#fff38c"/><stop offset="1" stop-color="#ffd25c"/></linearGradient></defs><path d="M2.4 3.6V1.9Q2.4 1 3.3 1H6.6Q7.4 1 7.4 1.9V3.6" fill="#fff" stroke="#c8921e" stroke-width="1.1"/><rect x="0.6" y="3.6" width="13" height="9.2" rx="0.8" fill="url(#fg17)" stroke="#c8921e" stroke-width="1.15"/><rect x="1.2" y="4.2" width="11.8" height="1.3" fill="#fff"/></svg>
<div class="t" style="left:70.8px;top:716.00px;font-size:15px;line-height:19px">consumers</div>
<div class="r" style="left:44px;top:743px;width:1px;height:4px;background:repeating-linear-gradient(#8a8a8a 0 1px,transparent 1px 2px)"></div>
<div class="r" style="left:44px;top:757px;width:1px;height:4px;background:repeating-linear-gradient(#8a8a8a 0 1px,transparent 1px 2px)"></div>
<div class="r" style="left:49px;top:751px;width:4px;height:1px;background:repeating-linear-gradient(90deg,transparent 0 1px,#8a8a8a 1px 2px)"></div>
<svg class="r" style="left:40px;top:747px;" width="9" height="9" viewBox="0 0 9 9"><rect x="0.5" y="0.5" width="8" height="8" fill="none" stroke="#777b84"/><path d="M2 4.5H7" stroke="#000" stroke-width="1.2"/><path d="M4.5 2V7" stroke="#000" stroke-width="1.2"/></svg>
<svg class="r" style="left:54px;top:745px;" width="15" height="14" viewBox="0 0 15 14"><defs><linearGradient id="fg18" x1="0" y1="0" x2="0" y2="1"><stop offset="0" stop-color="#fffbd8"/><stop offset="0.3" stop-color="#fff38c"/><stop offset="1" stop-color="#ffd25c"/></linearGradient></defs><path d="M2.4 3.6V1.9Q2.4 1 3.3 1H6.6Q7.4 1 7.4 1.9V3.6" fill="#fff" stroke="#c8921e" stroke-width="1.1"/><rect x="0.6" y="3.6" width="13" height="9.2" rx="0.8" fill="url(#fg18)" stroke="#c8921e" stroke-width="1.15"/><rect x="1.2" y="4.2" width="11.8" height="1.3" fill="#fff"/></svg>
<div class="t" style="left:70.8px;top:742.00px;font-size:15px;line-height:19px">log_dir_event_notification</div>
<div class="r" style="left:44px;top:769px;width:1px;height:4px;background:repeating-linear-gradient(#8a8a8a 0 1px,transparent 1px 2px)"></div>
<div class="r" style="left:44px;top:783px;width:1px;height:4px;background:repeating-linear-gradient(#8a8a8a 0 1px,transparent 1px 2px)"></div>
<div class="r" style="left:49px;top:777px;width:4px;height:1px;background:repeating-linear-gradient(90deg,transparent 0 1px,#8a8a8a 1px 2px)"></div>
<svg class="r" style="left:40px;top:773px;" width="9" height="9" viewBox="0 0 9 9"><rect x="0.5" y="0.5" width="8" height="8" fill="none" stroke="#777b84"/><path d="M2 4.5H7" stroke="#000" stroke-width="1.2"/><path d="M4.5 2V7" stroke="#000" stroke-width="1.2"/></svg>
<svg class="r" style="left:54px;top:771px;" width="15" height="14" viewBox="0 0 15 14"><defs><linearGradient id="fg19" x1="0" y1="0" x2="0" y2="1"><stop offset="0" stop-color="#fffbd8"/><stop offset="0.3" stop-color="#fff38c"/><stop offset="1" stop-color="#ffd25c"/></linearGradient></defs><path d="M2.4 3.6V1.9Q2.4 1 3.3 1H6.6Q7.4 1 7.4 1.9V3.6" fill="#fff" stroke="#c8921e" stroke-width="1.1"/><rect x="0.6" y="3.6" width="13" height="9.2" rx="0.8" fill="url(#fg19)" stroke="#c8921e" stroke-width="1.15"/><rect x="1.2" y="4.2" width="11.8" height="1.3" fill="#fff"/></svg>
<div class="t" style="left:70.8px;top:768.00px;font-size:15px;line-height:19px">latest_producer_id_block</div>
<div class="r" style="left:44px;top:795px;width:1px;height:4px;background:repeating-linear-gradient(#8a8a8a 0 1px,transparent 1px 2px)"></div>
<div class="r" style="left:49px;top:803px;width:4px;height:1px;background:repeating-linear-gradient(90deg,transparent 0 1px,#8a8a8a 1px 2px)"></div>
<svg class="r" style="left:40px;top:799px;" width="9" height="9" viewBox="0 0 9 9"><rect x="0.5" y="0.5" width="8" height="8" fill="none" stroke="#777b84"/><path d="M2 4.5H7" stroke="#000" stroke-width="1.2"/><path d="M4.5 2V7" stroke="#000" stroke-width="1.2"/></svg>
<svg class="r" style="left:54px;top:797px;" width="15" height="14" viewBox="0 0 15 14"><defs><linearGradient id="fg20" x1="0" y1="0" x2="0" y2="1"><stop offset="0" stop-color="#fffbd8"/><stop offset="0.3" stop-color="#fff38c"/><stop offset="1" stop-color="#ffd25c"/></linearGradient></defs><path d="M2.4 3.6V1.9Q2.4 1 3.3 1H6.6Q7.4 1 7.4 1.9V3.6" fill="#fff" stroke="#c8921e" stroke-width="1.1"/><rect x="0.6" y="3.6" width="13" height="9.2" rx="0.8" fill="url(#fg20)" stroke="#c8921e" stroke-width="1.15"/><rect x="1.2" y="4.2" width="11.8" height="1.3" fill="#fff"/></svg>
<div class="t" style="left:70.8px;top:794.00px;font-size:15px;line-height:19px">config</div>
<div class="r" style="left:58px;top:507px;width:87px;height:81px;border:1px solid #ff0000;box-sizing:border-box"></div>
<div class="r" style="left:231px;top:270px;width:1px;height:563px;background:#95B8E7"></div>
<div class="r" style="left:232px;top:238px;width:5px;height:595px;background:#E6EEF8"></div>
<div class="r" style="left:237px;top:238px;width:801px;height:35px;background:#E0ECFF;border:1px solid #95B8E7;box-sizing:border-box"></div>
<div class="r" style="left:237px;top:273px;width:801px;height:560px;background:#fff;border-left:1px solid #95B8E7;border-right:1px solid #95B8E7;box-sizing:border-box"></div>
<div class="r" style="left:242px;top:241px;width:91px;height:32px;background:#fff;border:1px solid #95B8E7;border-bottom:none;border-radius:5px 5px 0 0;box-sizing:border-box"></div>
<div class="t" style="left:252.8px;top:247.10px;font-size:15px;line-height:19px;color:#0E2D5F;font-weight:700">zk<span style="font-size:14px">集群</span>01</div>
<svg class="r" style="left:318px;top:253px;" width="8" height="8" viewBox="0 0 8 8"><path d="M1 1L7 7M7 1L1 7" stroke="#6c7c98" stroke-width="1.2"/></svg>
<div class="r" style="left:626px;top:239px;width:1px;height:33px;background:#95B8E7"></div>
<svg class="r" style="left:638px;top:247px;" width="11" height="16" viewBox="0 0 11 16"><defs><radialGradient id="bulb" cx="0.45" cy="0.4" r="0.6"><stop offset="0" stop-color="#fdfde0"/><stop offset="0.6" stop-color="#eeea86"/><stop offset="1" stop-color="#d8d050"/></radialGradient></defs><path d="M3.6 11.2Q3.4 9.2 1.9 7.6Q0.5 6 0.8 4.2Q1.4 0.6 5.5 0.6Q9.6 0.6 10.2 4.2Q10.5 6 9.1 7.6Q7.6 9.2 7.4 11.2Z" fill="url(#bulb)" stroke="#cfae6a" stroke-width="0.9"/><rect x="3.7" y="11.3" width="3.6" height="3.6" fill="#8c8c8c"/><rect x="3.7" y="12.6" width="3.6" height="0.8" fill="#d0d0d0"/><ellipse cx="5.5" cy="15.3" rx="4.5" ry="0.8" fill="#000" opacity="0.12"/></svg>
<div class="t" style="left:655px;top:246.15px;font-size:14px;line-height:18px;color:#444">连接状态</div>
<div class="t" style="left:713px;top:245.30px;font-size:15px;line-height:19px;color:#333">:</div>
<div class="t" style="left:725.5px;top:245.30px;font-size:15px;line-height:19px;color:#0000ff;letter-spacing:-0.15px">Connected</div>
<svg class="r" style="left:816px;top:247px;" width="16" height="16" viewBox="0 0 16 16"><path d="M5.5 0.5H10.5Q11.5 0.5 11.5 1.5V4.5H14.5Q15.5 4.5 15.5 5.5V10.5Q15.5 11.5 14.5 11.5H11.5V14.5Q11.5 15.5 10.5 15.5H5.5Q4.5 15.5 4.5 14.5V11.5H1.5Q0.5 11.5 0.5 10.5V5.5Q0.5 4.5 1.5 4.5H4.5V1.5Q4.5 0.5 5.5 0.5Z" fill="#fff" stroke="#2e6b2e" stroke-width="1"/><path d="M6 2H10V6H14V10H10V14H6V10H2V6H6Z" fill="#119111"/></svg>
<div class="t" style="left:836px;top:246.08px;font-size:14.2px;line-height:18px;color:#444">增加新节点</div>
<svg class="r" style="left:924px;top:250px;" width="16" height="10" viewBox="0 0 16 10"><rect x="0.6" y="0.6" width="14.8" height="8.8" rx="2" fill="#fff" stroke="#3b7a3b" stroke-width="1.1"/><rect x="2.5" y="2.6" width="11" height="4.8" fill="#149414"/></svg>
<div class="t" style="left:944px;top:246.15px;font-size:14px;line-height:18px;color:#444">删除当前节点</div>
<div class="t" style="left:242.7px;top:277.00px;font-size:15px;line-height:19px;color:#0000ff;font-weight:700;letter-spacing:-0.3px">Path:</div>
<div class="t" style="left:289.8px;top:278.63px;font-size:13.2px;line-height:17px;color:#ff0000;font-weight:700">/kafka321/brokers/ids</div>
<div class="t" style="left:242.7px;top:302.57px;font-size:12.2px;line-height:16px;color:#0000ff;font-weight:700">Node ACLs</div>
<div class="t" style="left:242.7px;top:320.00px;font-size:13px;line-height:17px">Scheme:</div>
<div class="t" style="left:408.7px;top:320.00px;font-size:13px;line-height:17px">world</div>
<div class="t" style="left:242.7px;top:338.00px;font-size:13px;line-height:17px">Id:</div>
<div class="t" style="left:408.7px;top:338.00px;font-size:13px;line-height:17px">anyone</div>
<div class="t" style="left:242.7px;top:356.00px;font-size:13px;line-height:17px">Permissions:</div>
<div class="t" style="left:408.7px;top:356.00px;font-size:13px;line-height:17px;letter-spacing:-0.3px">Read, Write, Create,</div>
<div class="t" style="left:408.7px;top:372.00px;font-size:13px;line-height:17px;letter-spacing:-0.3px">Delete, Admin</div>
<div class="t" style="left:242.7px;top:393.70px;font-size:15.3px;line-height:20px;color:#0000ff;font-weight:700">Node Metadata</div>
<div class="t" style="left:242.5px;top:415.50px;font-size:13px;line-height:17px;letter-spacing:-0.1px">Data Length:</div>
<div class="t" style="left:343.2px;top:415.50px;font-size:13px;line-height:17px;letter-spacing:-0.2px">0</div>
<div class="t" style="left:242.5px;top:440.50px;font-size:13px;line-height:17px;letter-spacing:-0.1px">Creation Time:</div>
<div class="t" style="left:343.2px;top:432.50px;font-size:13px;line-height:17px;letter-spacing:-0.2px">2024-01-16 21:49:32</div>
<div class="t" style="left:343.2px;top:448.50px;font-size:13px;line-height:17px;letter-spacing:-0.2px">[1705412972994]</div>
<div class="t" style="left:242.5px;top:466.50px;font-size:13px;line-height:17px;letter-spacing:-0.1px">Last Modified</div>
<div class="t" style="left:242.5px;top:482.50px;font-size:13px;line-height:17px;letter-spacing:-0.1px">Time:</div>
<div class="t" style="left:343.2px;top:466.50px;font-size:13px;line-height:17px;letter-spacing:-0.2px">2024-01-16 21:49:32</div>
<div class="t" style="left:343.2px;top:482.50px;font-size:13px;line-height:17px;letter-spacing:-0.2px">[1705412972994]</div>
<div class="t" style="left:242.5px;top:500.50px;font-size:13px;line-height:17px;letter-spacing:-0.1px">Data Version:</div>
<div class="t" style="left:343.2px;top:500.50px;font-size:13px;line-height:17px;letter-spacing:-0.2px">0</div>
<div class="t" style="left:242.5px;top:518.50px;font-size:13px;line-height:17px;letter-spacing:-0.1px">Children</div>
<div class="t" style="left:242.5px;top:534.50px;font-size:13px;line-height:17px;letter-spacing:-0.1px">Version:</div>
<div class="t" style="left:343.2px;top:526.50px;font-size:13px;line-height:17px;letter-spacing:-0.2px">7</div>
<div class="t" style="left:242.5px;top:552.50px;font-size:13px;line-height:17px;letter-spacing:-0.1px">ACL Version:</div>
<div class="t" style="left:343.2px;top:552.50px;font-size:13px;line-height:17px;letter-spacing:-0.2px">0</div>
<div class="t" style="left:242.5px;top:570.50px;font-size:13px;line-height:17px;letter-spacing:-0.1px">Ephemeral</div>
<div class="t" style="left:242.5px;top:586.50px;font-size:13px;line-height:17px;letter-spacing:-0.1px">Owner:</div>
<div class="t" style="left:343.2px;top:578.50px;font-size:13px;line-height:17px;letter-spacing:-0.2px">0</div>
<div class="t" style="left:242.5px;top:604.50px;font-size:13px;line-height:17px;letter-spacing:-0.1px">Number Of</div>
<div class="t" style="left:242.5px;top:620.50px;font-size:13px;line-height:17px;letter-spacing:-0.1px">Children:</div>
<div class="t" style="left:343.2px;top:612.50px;font-size:13px;line-height:17px;letter-spacing:-0.2px">3</div>
<div class="t" style="left:242.5px;top:638.50px;font-size:13px;line-height:17px;letter-spacing:-0.1px">Node Zxid:</div>
<div class="t" style="left:343.2px;top:638.50px;font-size:13px;line-height:17px;letter-spacing:-0.2px">17179869241</div>
<div class="t" style="left:242.5px;top:656.50px;font-size:13px;line-height:17px;letter-spacing:-0.1px">Creation Zxid:</div>
<div class="t" style="left:343.2px;top:656.50px;font-size:13px;line-height:17px;letter-spacing:-0.2px">8589934608</div>
<div class="t" style="left:242.5px;top:674.50px;font-size:13px;line-height:17px;letter-spacing:-0.1px">Modified Zxid:</div>
<div class="t" style="left:343.2px;top:674.50px;font-size:13px;line-height:17px;letter-spacing:-0.2px">8589934608</div>
<div class="t" style="left:546.5px;top:307.70px;font-size:15.3px;line-height:20px;color:#0000ff;font-weight:700">Node Data</div>
<div class="r" style="left:971px;top:302px;width:62px;height:30px;background:linear-gradient(#ffffff,#ededed);border:1px solid #bbb;border-radius:5px;box-sizing:border-box"></div>
<svg class="r" style="left:979px;top:309px;" width="14" height="15" viewBox="0 0 14 15"><defs><linearGradient id="svl" x1="0" y1="0" x2="1" y2="1"><stop offset="0" stop-color="#ffffff"/><stop offset="1" stop-color="#c6d6fa"/></linearGradient></defs><rect x="0.5" y="0.5" width="13" height="14" fill="#3b78ec" stroke="#1e4fd6"/><rect x="1.5" y="1" width="11" height="6.5" fill="url(#svl)"/><rect x="3.5" y="9.5" width="7" height="5" fill="#dcdce4"/><rect x="4.3" y="10.5" width="1.6" height="3" fill="#1e4fd6"/></svg>
<div class="t" style="left:997.5px;top:307.48px;font-size:14.5px;line-height:19px;color:#444">保存</div>
<div class="r" style="left:549px;top:337px;width:484px;height:306px;background:#fff;border:1px solid #6494ee;box-sizing:border-box"></div>
<svg class="r" style="left:1021px;top:631px;" width="10" height="10" viewBox="0 0 10 10"><path d="M9 2L2 9M9 6L6 9" stroke="#555" stroke-width="1"/></svg>
<div class="r" style="left:1038px;top:238px;width:5px;height:595px;background:#E6EEF8"></div>
<div class="r" style="left:1043px;top:238px;width:315px;height:32px;background:linear-gradient(#EFF5FF,#E0ECFF);border:1px solid #95B8E7;box-sizing:border-box"></div>
<div class="t" style="left:1049px;top:244.30px;font-size:15px;line-height:19px;color:#0E2D5F;font-weight:700">ZK<span style="font-size:14px">状态</span></div>
<svg class="r" style="left:1338px;top:248px;" width="13" height="12" viewBox="0 0 13 12"><path d="M2 1.5L6.5 6L2 10.5M6.5 1.5L11 6L6.5 10.5" fill="none" stroke="#4fa6ea" stroke-width="1.5"/></svg>
<div class="r" style="left:1043px;top:270px;width:315px;height:563px;background:#fff;border-left:1px solid #95B8E7;border-right:1px solid #95B8E7;box-sizing:border-box"></div>
<svg class="r" style="left:1050px;top:277px;" width="14" height="14" viewBox="0 0 14 14"><circle cx="6.6" cy="6.5" r="5.9" fill="#fff" stroke="#7a7a7a" stroke-width="1.3"/><circle cx="6.6" cy="6.5" r="3.4" fill="#767676"/></svg>
<div class="t" style="left:1066px;top:274.80px;font-size:15px;line-height:19px">简单</div>
<svg class="r" style="left:1103px;top:277px;" width="14" height="14" viewBox="0 0 14 14"><circle cx="6.4" cy="6.5" r="5.9" fill="#fff" stroke="#7a7a7a" stroke-width="1.3"/></svg>
<div class="t" style="left:1119.6px;top:274.80px;font-size:15px;line-height:19px">详细</div>
<svg class="r" style="left:1158px;top:277px;" width="16" height="18" viewBox="0 0 16 18"><path d="M2.2 9Q2.5 5.5 6 5.5H10" fill="none" stroke="#2f7a35" stroke-width="3.8"/><path d="M2.2 9Q2.5 5.5 6 5.5H10.5" fill="none" stroke="#8fe08a" stroke-width="2"/><path d="M9.3 1.3L14.3 5.5L9.3 9.7Z" fill="#8fe08a" stroke="#2f7a35" stroke-width="1" stroke-linejoin="round"/><path d="M13.8 9Q13.5 12.5 10 12.5H6" fill="none" stroke="#2f7a35" stroke-width="3.8"/><path d="M13.8 9Q13.5 12.5 10 12.5H5.5" fill="none" stroke="#8fe08a" stroke-width="2"/><path d="M6.7 8.3L1.7 12.5L6.7 16.7Z" fill="#8fe08a" stroke="#2f7a35" stroke-width="1" stroke-linejoin="round"/></svg>
<div class="t" style="left:1178px;top:276.15px;font-size:14px;line-height:18px;color:#444">定时刷新</div>
<div class="r" style="left:1245px;top:277px;width:43px;height:18px;background:#fff;border:1px solid #95B8E7;border-radius:5px;box-sizing:border-box;overflow:hidden"></div>
<div class="r" style="left:1261px;top:278px;width:26px;height:16px;background:#eef5ff;border-radius:0 4px 4px 0"></div>
<div class="t" style="left:1250.5px;top:276.30px;font-size:15px;line-height:19px">0</div>
<svg class="r" style="left:1268px;top:277px;" width="13" height="18" viewBox="0 0 13 18"><path d="M2.5 6.5L6.5 2.8L10.5 6.5M2.5 11L6.5 14.8L10.5 11" fill="none" stroke="#7dbdf3" stroke-width="2"/></svg>
<div class="t" style="left:1289.6px;top:276.30px;font-size:15px;line-height:19px">(s)</div>
<div class="r" style="left:1045px;top:301px;width:270px;height:532px;background:#fff;border:1px solid #95B8E7;border-bottom:none;box-sizing:border-box"></div>
<div class="r" style="left:1046px;top:302px;width:268px;height:32px;background:linear-gradient(#F9F9F9,#EFEFEF);border-bottom:1px solid #ddd;box-sizing:border-box"></div>
<div class="r" style="left:1065px;top:302px;width:1px;height:31px;background:repeating-linear-gradient(#ccc 0 1px,transparent 1px 2px)"></div>
<div class="r" style="left:1189px;top:302px;width:1px;height:31px;background:repeating-linear-gradient(#ccc 0 1px,transparent 1px 2px)"></div>
<div class="r" style="left:1312px;top:302px;width:1px;height:31px;background:repeating-linear-gradient(#ccc 0 1px,transparent 1px 2px)"></div>
<div class="t" style="left:1070.4px;top:308.20px;font-size:15px;line-height:19px;letter-spacing:-0.2px">Name</div>
<svg class="r" style="left:1113px;top:316px;" width="9" height="6" viewBox="0 0 9 6"><path d="M0.5 5L4.5 1L8.5 5Z" fill="#5d8fd6"/></svg>
<div class="t" style="left:1194.6px;top:308.20px;font-size:15px;line-height:19px;letter-spacing:-0.3px">Value</div>
<div class="r" style="left:1046px;top:334px;width:20px;height:499px;background:#E0ECFF"></div>
<div class="r" style="left:1046px;top:334px;width:268px;height:29px;background:#E0ECFF"></div>
<svg class="r" style="left:1050px;top:345px;" width="12" height="6" viewBox="0 0 12 6"><rect x="0.6" y="0.6" width="10" height="4.2" rx="1" fill="#fff" stroke="#333" stroke-width="1"/></svg>
<div class="t" style="left:1070.4px;top:338.30px;font-size:15px;line-height:19px;font-weight:700;letter-spacing:0.05px">192.168.1.121.2181.srvr</div>
<div class="r" style="left:1066px;top:363px;width:247px;height:31px;background:#fff"></div>
<div class="r" style="left:1066px;top:394px;width:247px;height:1px;background:repeating-linear-gradient(90deg,#ccc 0 1px,transparent 1px 2px)"></div>
<div class="r" style="left:1189px;top:363px;width:1px;height:31px;background:repeating-linear-gradient(#ccc 0 1px,transparent 1px 2px)"></div>
<div class="r" style="left:1312px;top:363px;width:1px;height:31px;background:repeating-linear-gradient(#ccc 0 1px,transparent 1px 2px)"></div>
<div class="t" style="left:1070.4px;top:369.30px;font-size:15px;line-height:19px;letter-spacing:-0.1px">Mode</div>
<div class="t" style="left:1194.6px;top:369.30px;font-size:15px;line-height:19px;letter-spacing:-0.1px">follower</div>
<div class="r" style="left:1046px;top:395px;width:268px;height:29px;background:#E0ECFF"></div>
<svg class="r" style="left:1050px;top:406px;" width="12" height="6" viewBox="0 0 12 6"><rect x="0.6" y="0.6" width="10" height="4.2" rx="1" fill="#fff" stroke="#333" stroke-width="1"/></svg>
<div class="t" style="left:1070.4px;top:399.30px;font-size:15px;line-height:19px;font-weight:700;letter-spacing:0.05px">192.168.1.122.2181.srvr</div>
<div class="r" style="left:1066px;top:424px;width:247px;height:31px;background:#fafafa"></div>
<div class="r" style="left:1046px;top:424px;width:20px;height:32px;background:#fafafa"></div>
<div class="r" style="left:1065px;top:424px;width:1px;height:31px;background:repeating-linear-gradient(#ccc 0 1px,transparent 1px 2px)"></div>
<div class="r" style="left:1066px;top:455px;width:247px;height:1px;background:repeating-linear-gradient(90deg,#ccc 0 1px,transparent 1px 2px)"></div>
<div class="r" style="left:1189px;top:424px;width:1px;height:31px;background:repeating-linear-gradient(#ccc 0 1px,transparent 1px 2px)"></div>
<div class="r" style="left:1312px;top:424px;width:1px;height:31px;background:repeating-linear-gradient(#ccc 0 1px,transparent 1px 2px)"></div>
<div class="t" style="left:1070.4px;top:430.30px;font-size:15px;line-height:19px;letter-spacing:-0.1px">Mode</div>
<div class="t" style="left:1194.6px;top:430.30px;font-size:15px;line-height:19px;letter-spacing:-0.1px">leader</div>
<div class="r" style="left:1046px;top:456px;width:268px;height:29px;background:#E0ECFF"></div>
<svg class="r" style="left:1050px;top:467px;" width="12" height="6" viewBox="0 0 12 6"><rect x="0.6" y="0.6" width="10" height="4.2" rx="1" fill="#fff" stroke="#333" stroke-width="1"/></svg>
<div class="t" style="left:1070.4px;top:460.30px;font-size:15px;line-height:19px;font-weight:700;letter-spacing:0.05px">192.168.1.123.2181.srvr</div>
<div class="r" style="left:1066px;top:485px;width:247px;height:31px;background:#fff"></div>
<div class="r" style="left:1066px;top:516px;width:247px;height:1px;background:repeating-linear-gradient(90deg,#ccc 0 1px,transparent 1px 2px)"></div>
<div class="r" style="left:1189px;top:485px;width:1px;height:31px;background:repeating-linear-gradient(#ccc 0 1px,transparent 1px 2px)"></div>
<div class="r" style="left:1312px;top:485px;width:1px;height:31px;background:repeating-linear-gradient(#ccc 0 1px,transparent 1px 2px)"></div>
<div class="t" style="left:1070.4px;top:491.30px;font-size:15px;line-height:19px;letter-spacing:-0.1px">Mode</div>
<div class="t" style="left:1194.6px;top:491.30px;font-size:15px;line-height:19px;letter-spacing:-0.1px">follower</div>
</body></html>
